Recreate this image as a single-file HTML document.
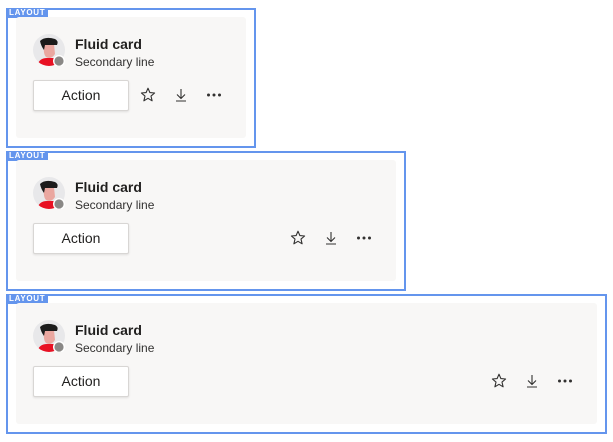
<!DOCTYPE html>
<html><head><style>
body{margin:0;width:613px;height:442px;background:#fff;font-family:"Liberation Sans",sans-serif;position:relative;overflow:hidden}
.fr{position:absolute;left:6px;border:2px solid #6495ed;box-sizing:border-box}
.lab{position:absolute;left:-2px;top:-2px;background:#6495ed;color:#fff;font-size:8px;font-weight:bold;letter-spacing:.7px;padding:0 3px;height:10px;line-height:10px}
.card{position:absolute;left:8px;top:7px;bottom:8px;right:8px;background:#f8f7f6;border-radius:3px}
.av{position:absolute;left:17px;top:17px;width:32px;height:32px}
.t{position:absolute;left:59px;top:19px;font-size:14px;font-weight:bold;color:#201f1e}
.s{position:absolute;left:59px;top:38px;font-size:12px;color:#323130}
.btn{position:absolute;left:17px;top:63px;width:96px;height:31px;background:#fff;border:1px solid #d8d6d4;border-radius:2px;box-sizing:border-box;text-align:center;line-height:29px;font-size:14px;color:#201f1e;box-shadow:0 1px 2px rgba(0,0,0,.1)}
.ic{position:absolute;top:63px;height:30px;display:flex;gap:1px}
.ic div{width:32px;height:30px;display:flex;align-items:center;justify-content:center}
</style></head><body>
<div class="fr" style="top:8px;width:250px;height:140px"><div class="lab">LAYOUT</div><div class="card"></div></div>
<div class="fr" style="top:151px;width:400px;height:140px"><div class="lab">LAYOUT</div><div class="card"></div></div>
<div class="fr" style="top:294px;width:601px;height:140px"><div class="lab">LAYOUT</div><div class="card"></div></div>
<script>
var av='<svg class="av" viewBox="0 0 32 32"><defs><clipPath id="cp"><circle cx="16" cy="16" r="16"/></clipPath></defs><g clip-path="url(#cp)"><rect width="32" height="32" fill="#e8e8ea"/><path d="M4 32 Q6 24 14 24 L20 24 Q26 25 26 32Z" fill="#e81123"/><path d="M11 10 L21 10 L22 20 Q18 26 13 23 Q10 20 11 10Z" fill="#eaa7a0"/><path d="M7 7 Q12 2 22 5 Q26 7 24 11 L12 11 L11 16 Q8 12 7 7Z" fill="#1b1b1b"/></g><circle cx="26" cy="27" r="6" fill="#fff"/><circle cx="26" cy="27" r="4.6" fill="#8a8886"/></svg>';
var icons='<div><svg width="18" height="18" viewBox="0 0 18 18"><path d="M9 2.2 L10.9 6.6 L15.6 7 L12 10.1 L13.1 14.8 L9 12.3 L4.9 14.8 L6 10.1 L2.4 7 L7.1 6.6Z" fill="none" stroke="#323130" stroke-width="1.1" stroke-linejoin="round"/></svg></div><div><svg width="18" height="18" viewBox="0 0 18 18"><path d="M9 3v9M5 8.5l4 4 4-4M4 15h10" fill="none" stroke="#323130" stroke-width="1.1"/></svg></div><div><svg width="18" height="18" viewBox="0 0 18 18"><circle cx="3.5" cy="9" r="1.5" fill="#323130"/><circle cx="9" cy="9" r="1.5" fill="#323130"/><circle cx="14.5" cy="9" r="1.5" fill="#323130"/></svg></div>';
document.querySelectorAll('.card').forEach(function(c,i){
 var pos=i==0?'left:116px':'right:16px';
 c.innerHTML=av+'<div class="t">Fluid card</div><div class="s">Secondary line</div><div class="btn">Action</div><div class="ic" style="'+pos+'">'+icons+'</div>';
});
</script>
</body></html>
